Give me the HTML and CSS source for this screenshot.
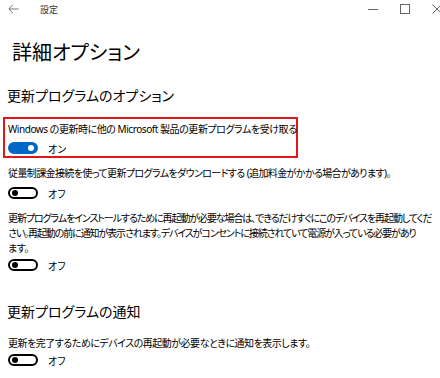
FILE: index.html
```html
<html>
<head>
	<title>設定</title>
	<link rel="stylesheet" href="styles.css">
</head>
<body>
	<!----- Title bar ---------------------------------------------------------->
	<div class="titlebar">
		<svg class="back" width="11" height="10" viewBox="0 0 11 10"><path d="M10.5 5H1M5 0.8L0.8 5 5 9.2" fill="none" stroke="#777" stroke-width="1"/></svg>
		<span class="apptitle">設定</span>
		<div class="controls">
			<svg width="11" height="10" viewBox="0 0 11 10"><path d="M0 5.5H10" stroke="#666" stroke-width="1"/></svg>
			<svg width="11" height="10" viewBox="0 0 11 10"><rect x="0.5" y="0.5" width="9" height="9" fill="none" stroke="#666" stroke-width="1"/></svg>
			<svg width="11" height="10" viewBox="0 0 11 10"><path d="M0.5 0.5L9.5 9.5M9.5 0.5L0.5 9.5" stroke="#666" stroke-width="1"/></svg>
		</div>
	</div>

	<div class="page">
		<h1>詳細オプション</h1>

		<!----- Update options ---------------------------------------------------------->
		<h2 class="first">更新プログラムのオプション</h2>

		<div class="setting marked">
			<p>Windows の更新時に他の Microsoft 製品の更新プログラムを受け取る</p>
			<div class="switch-row">
				<span class="switch on"><span class="knob"></span></span>
				<span class="state">オン</span>
			</div>
		</div>

		<div class="setting metered">
			<p>従量制課金接続を使って更新プログラムをダウンロードする (追加料金がかかる場合があります)。</p>
			<div class="switch-row">
				<span class="switch"><span class="knob"></span></span>
				<span class="state">オフ</span>
			</div>
		</div>

		<div class="setting restart">
			<div class="long">
				<p>更新プログラムをインストールするために再起動が必要な場合は、できるだけすぐにこのデバイスを再起動してくだ</p>
				<p>さい。再起動の前に通知が表示されます。デバイスがコンセントに接続されていて電源が入っている必要があり</p>
				<p class="last">ます。</p>
			</div>
			<div class="switch-row tight">
				<span class="switch"><span class="knob"></span></span>
				<span class="state">オフ</span>
			</div>
		</div>

		<!----- Update notifications ---------------------------------------------------------->
		<h2 class="second">更新プログラムの通知</h2>

		<div class="setting notify">
			<p>更新を完了するためにデバイスの再起動が必要なときに通知を表示します。</p>
			<div class="switch-row tight">
				<span class="switch"><span class="knob"></span></span>
				<span class="state">オフ</span>
			</div>
		</div>
	</div>
</body>
</html>
```

FILE: styles.css
```css
body {
	margin: 0;
	background: #fff;
	color: #000;
	font-family: "Noto Sans", "Noto Sans CJK JP", sans-serif;
	font-feature-settings: "palt";
	overflow: hidden;
}

.titlebar {
	height: 18px;
	display: flex;
	align-items: center;
	padding-left: 8px;
}
.apptitle {
	margin-left: 21px;
	font-size: 9px;
	color: #333;
}
.controls {
	margin-left: auto;
	display: flex;
	gap: 21px;
	margin-right: -3px;
}

.page {
	padding-left: 8px;
}

h1 {
	margin: 21px 0 0 4px;
	font-size: 20px;
	font-weight: normal;
	line-height: 28px;
}
h2 {
	margin: 0 0 0 -1px;
	font-size: 14px;
	font-weight: normal;
	line-height: 20px;
}
h2.first {
	margin-top: 19px;
}
h2.second {
	margin-top: 29px;
}

p {
	margin: 0;
	font-size: 10px;
	letter-spacing: -0.5px;
	line-height: 16px;
	white-space: nowrap;
}
.long p {
	line-height: 15px;
	letter-spacing: -1.1px;
}
.long p.last {
	letter-spacing: -0.5px;
}

.setting.marked {
	margin: 11px 0 0 -5px;
	width: 288px;
	border: 2px solid #e0161b;
	padding: 2px 0 0 3px;
}
.setting.marked p {
	letter-spacing: -0.45px;
}
.setting.metered p {
	letter-spacing: -0.62px;
}
.setting.restart {
	margin-top: 10px;
}
.setting.metered {
	margin-top: 7px;
}
.setting.notify {
	margin-top: 13px;
}

.switch-row {
	display: flex;
	align-items: center;
	height: 16px;
	margin-top: 4px;
	gap: 10px;
	font-size: 10px;
}
.marked .switch-row {
	margin-top: 3px;
}
.switch-row.tight {
	margin-top: 1px;
}

.switch {
	box-sizing: border-box;
	width: 30px;
	height: 12px;
	border: 2px solid #000;
	border-radius: 6px;
	display: flex;
	align-items: center;
	padding-left: 2px;
}
.switch .knob {
	width: 6px;
	height: 6px;
	border-radius: 50%;
	background: #000;
}
.switch.on {
	background: #0067c6;
	border-color: #0067c6;
	justify-content: flex-end;
	padding: 0 2px 0 0;
}
.switch.on .knob {
	background: #fff;
}
```
